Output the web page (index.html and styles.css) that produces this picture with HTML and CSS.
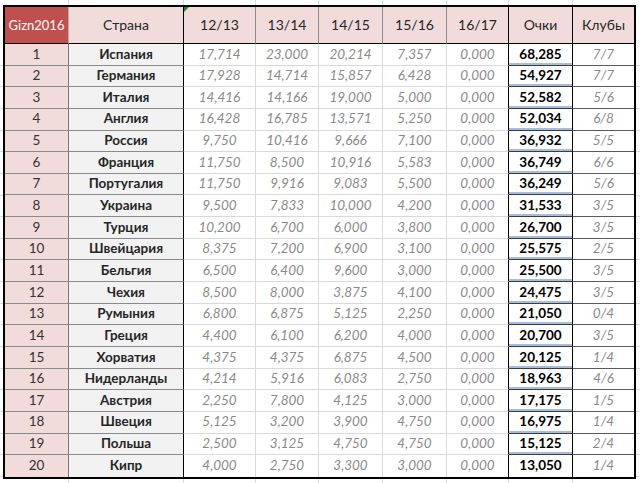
FILE: index.html
```html
<!DOCTYPE html>
<html lang="ru">
<head>
<meta charset="utf-8">
<title>Gizn2016</title>
<link rel="stylesheet" href="styles.css">
</head>
<body>
<div class="sheet">
  <div class="row head">
    <div class="c h h-id">Gizn2016</div>
    <div class="c h h-country">Страна</div>
    <div class="c h h-note">12/13</div>
    <div class="c h">13/14</div>
    <div class="c h">14/15</div>
    <div class="c h">15/16</div>
    <div class="c h h-dark">16/17</div>
    <div class="c h h-dark">Очки</div>
    <div class="c h h-end">Клубы</div>
  </div>
  <div class="row"><div class="c rank">1</div><div class="c country">Испания</div><div class="c val">17,714</div><div class="c val">23,000</div><div class="c val">20,214</div><div class="c val">7,357</div><div class="c val v-end">0,000</div><div class="c pts">68,285</div><div class="c clubs">7/7</div></div>
  <div class="row"><div class="c rank">2</div><div class="c country">Германия</div><div class="c val">17,928</div><div class="c val">14,714</div><div class="c val">15,857</div><div class="c val">6,428</div><div class="c val v-end">0,000</div><div class="c pts">54,927</div><div class="c clubs">7/7</div></div>
  <div class="row"><div class="c rank">3</div><div class="c country">Италия</div><div class="c val">14,416</div><div class="c val">14,166</div><div class="c val">19,000</div><div class="c val">5,000</div><div class="c val v-end">0,000</div><div class="c pts">52,582</div><div class="c clubs">5/6</div></div>
  <div class="row"><div class="c rank">4</div><div class="c country">Англия</div><div class="c val">16,428</div><div class="c val">16,785</div><div class="c val">13,571</div><div class="c val">5,250</div><div class="c val v-end">0,000</div><div class="c pts">52,034</div><div class="c clubs">6/8</div></div>
  <div class="row"><div class="c rank">5</div><div class="c country">Россия</div><div class="c val">9,750</div><div class="c val">10,416</div><div class="c val">9,666</div><div class="c val">7,100</div><div class="c val v-end">0,000</div><div class="c pts">36,932</div><div class="c clubs">5/5</div></div>
  <div class="row"><div class="c rank">6</div><div class="c country">Франция</div><div class="c val">11,750</div><div class="c val">8,500</div><div class="c val">10,916</div><div class="c val">5,583</div><div class="c val v-end">0,000</div><div class="c pts">36,749</div><div class="c clubs">6/6</div></div>
  <div class="row"><div class="c rank">7</div><div class="c country">Португалия</div><div class="c val">11,750</div><div class="c val">9,916</div><div class="c val">9,083</div><div class="c val">5,500</div><div class="c val v-end">0,000</div><div class="c pts">36,249</div><div class="c clubs">5/6</div></div>
  <div class="row"><div class="c rank">8</div><div class="c country">Украина</div><div class="c val">9,500</div><div class="c val">7,833</div><div class="c val">10,000</div><div class="c val">4,200</div><div class="c val v-end">0,000</div><div class="c pts">31,533</div><div class="c clubs">3/5</div></div>
  <div class="row"><div class="c rank">9</div><div class="c country">Турция</div><div class="c val">10,200</div><div class="c val">6,700</div><div class="c val">6,000</div><div class="c val">3,800</div><div class="c val v-end">0,000</div><div class="c pts">26,700</div><div class="c clubs">3/5</div></div>
  <div class="row"><div class="c rank">10</div><div class="c country">Швейцария</div><div class="c val">8,375</div><div class="c val">7,200</div><div class="c val">6,900</div><div class="c val">3,100</div><div class="c val v-end">0,000</div><div class="c pts">25,575</div><div class="c clubs">2/5</div></div>
  <div class="row"><div class="c rank">11</div><div class="c country">Бельгия</div><div class="c val">6,500</div><div class="c val">6,400</div><div class="c val">9,600</div><div class="c val">3,000</div><div class="c val v-end">0,000</div><div class="c pts">25,500</div><div class="c clubs">3/5</div></div>
  <div class="row"><div class="c rank">12</div><div class="c country">Чехия</div><div class="c val">8,500</div><div class="c val">8,000</div><div class="c val">3,875</div><div class="c val">4,100</div><div class="c val v-end">0,000</div><div class="c pts">24,475</div><div class="c clubs">3/5</div></div>
  <div class="row"><div class="c rank">13</div><div class="c country">Румыния</div><div class="c val">6,800</div><div class="c val">6,875</div><div class="c val">5,125</div><div class="c val">2,250</div><div class="c val v-end">0,000</div><div class="c pts">21,050</div><div class="c clubs">0/4</div></div>
  <div class="row"><div class="c rank">14</div><div class="c country">Греция</div><div class="c val">4,400</div><div class="c val">6,100</div><div class="c val">6,200</div><div class="c val">4,000</div><div class="c val v-end">0,000</div><div class="c pts">20,700</div><div class="c clubs">3/5</div></div>
  <div class="row"><div class="c rank">15</div><div class="c country">Хорватия</div><div class="c val">4,375</div><div class="c val">4,375</div><div class="c val">6,875</div><div class="c val">4,500</div><div class="c val v-end">0,000</div><div class="c pts">20,125</div><div class="c clubs">1/4</div></div>
  <div class="row"><div class="c rank">16</div><div class="c country">Нидерланды</div><div class="c val">4,214</div><div class="c val">5,916</div><div class="c val">6,083</div><div class="c val">2,750</div><div class="c val v-end">0,000</div><div class="c pts">18,963</div><div class="c clubs">4/6</div></div>
  <div class="row"><div class="c rank">17</div><div class="c country">Австрия</div><div class="c val">2,250</div><div class="c val">7,800</div><div class="c val">4,125</div><div class="c val">3,000</div><div class="c val v-end">0,000</div><div class="c pts">17,175</div><div class="c clubs">1/5</div></div>
  <div class="row"><div class="c rank">18</div><div class="c country">Швеция</div><div class="c val">5,125</div><div class="c val">3,200</div><div class="c val">3,900</div><div class="c val">4,750</div><div class="c val v-end">0,000</div><div class="c pts">16,975</div><div class="c clubs">1/4</div></div>
  <div class="row"><div class="c rank">19</div><div class="c country">Польша</div><div class="c val">2,500</div><div class="c val">3,125</div><div class="c val">4,750</div><div class="c val">4,750</div><div class="c val v-end">0,000</div><div class="c pts">15,125</div><div class="c clubs">2/4</div></div>
  <div class="row"><div class="c rank">20</div><div class="c country">Кипр</div><div class="c val">4,000</div><div class="c val">2,750</div><div class="c val">3,300</div><div class="c val">3,000</div><div class="c val v-end">0,000</div><div class="c pts">13,050</div><div class="c clubs">1/4</div></div>
</div>
</body>
</html>
```
FILE: styles.css
```css
html, body {
  margin: 0;
  padding: 0;
}

body {
  width: 640px;
  height: 483px;
  overflow: hidden;
  background-color: #fff;
  /* faint spreadsheet gridlines visible around the bordered table */
  background-image:
    linear-gradient(#dadada, #dadada),
    linear-gradient(#dadada, #dadada),
    linear-gradient(#dadada, #dadada),
    linear-gradient(#dadada, #dadada),
    linear-gradient(#dadada, #dadada),
    linear-gradient(#dadada, #dadada),
    linear-gradient(#dadada, #dadada),
    linear-gradient(#dadada, #dadada),
    repeating-linear-gradient(to bottom, transparent 0 20.65px, #dadada 20.65px 21.65px);
  background-size:
    1px 100%, 1px 100%, 1px 100%, 1px 100%, 1px 100%, 1px 100%, 1px 100%, 1px 100%,
    100% 100%;
  background-position:
    68px 0, 183px 0, 255px 0, 318px 0, 382px 0, 446px 0, 508px 0, 572px 0,
    0 44px;
  background-repeat: no-repeat;
  font-family: Lato, "Open Sans", "DejaVu Sans", sans-serif;
}

.sheet {
  display: grid;
  grid-template-columns: 64px 115px 72px 63px 64px 64px 62px 64px 61px;
  grid-template-rows: 37px repeat(20, 21.65px);
  width: max-content;
  margin: 5px 0 0 3px;
  border: 2px solid #000;
  background: #fff;
  font-size: 13.5px;
}

.row {
  display: contents;
}

.c {
  box-sizing: border-box;
  display: flex;
  align-items: center;
  justify-content: center;
  border-right: 1px solid #d9d9d9;
  border-bottom: 1px solid #d9d9d9;
  background: #fff;
  white-space: nowrap;
  line-height: 1;
}

/* header */
.h {
  position: relative;
  background: #f2dcdb;
  color: #262626;
  border-right-color: #8c8c8c;
  border-bottom-color: #000;
  font-size: 14px;
}

.h-id {
  background: #c0504d;
  color: #fff;
  border-right-color: #c9a9a8;
  font-size: 13px;
}

.h-country,
.h-dark {
  border-right-color: #000;
}

.h-end {
  border-right: 0;
}

/* green comment marker on the 12/13 header */
.h-note::before {
  content: "";
  position: absolute;
  left: 0;
  top: 0;
  border-top: 5px solid #1e8c2e;
  border-right: 5px solid transparent;
}

/* body */
.rank {
  background: #f2dcdb;
  color: #333;
  border-right-color: #7a7a7a;
  border-bottom-color: #8a8a8a;
}

.country {
  background: #f2f2f2;
  color: #262626;
  font-weight: 700;
  border-right-color: #000;
  border-bottom-color: #8a8a8a;
}

.val {
  color: #8a8a8a;
  font-style: italic;
}

.v-end {
  border-right-color: #000;
}

.pts {
  color: #000;
  font-weight: 700;
  border-right-color: #000;
  border-bottom-color: #3c3c3c;
  box-shadow: inset 0 -2px 0 #a4bedd;
}

.clubs {
  color: #8a8a8a;
  font-style: italic;
  border-right: 0;
  border-bottom-color: #5a5a5a;
}

.row:last-child .c {
  border-bottom: 0;
  box-shadow: none;
}
```
